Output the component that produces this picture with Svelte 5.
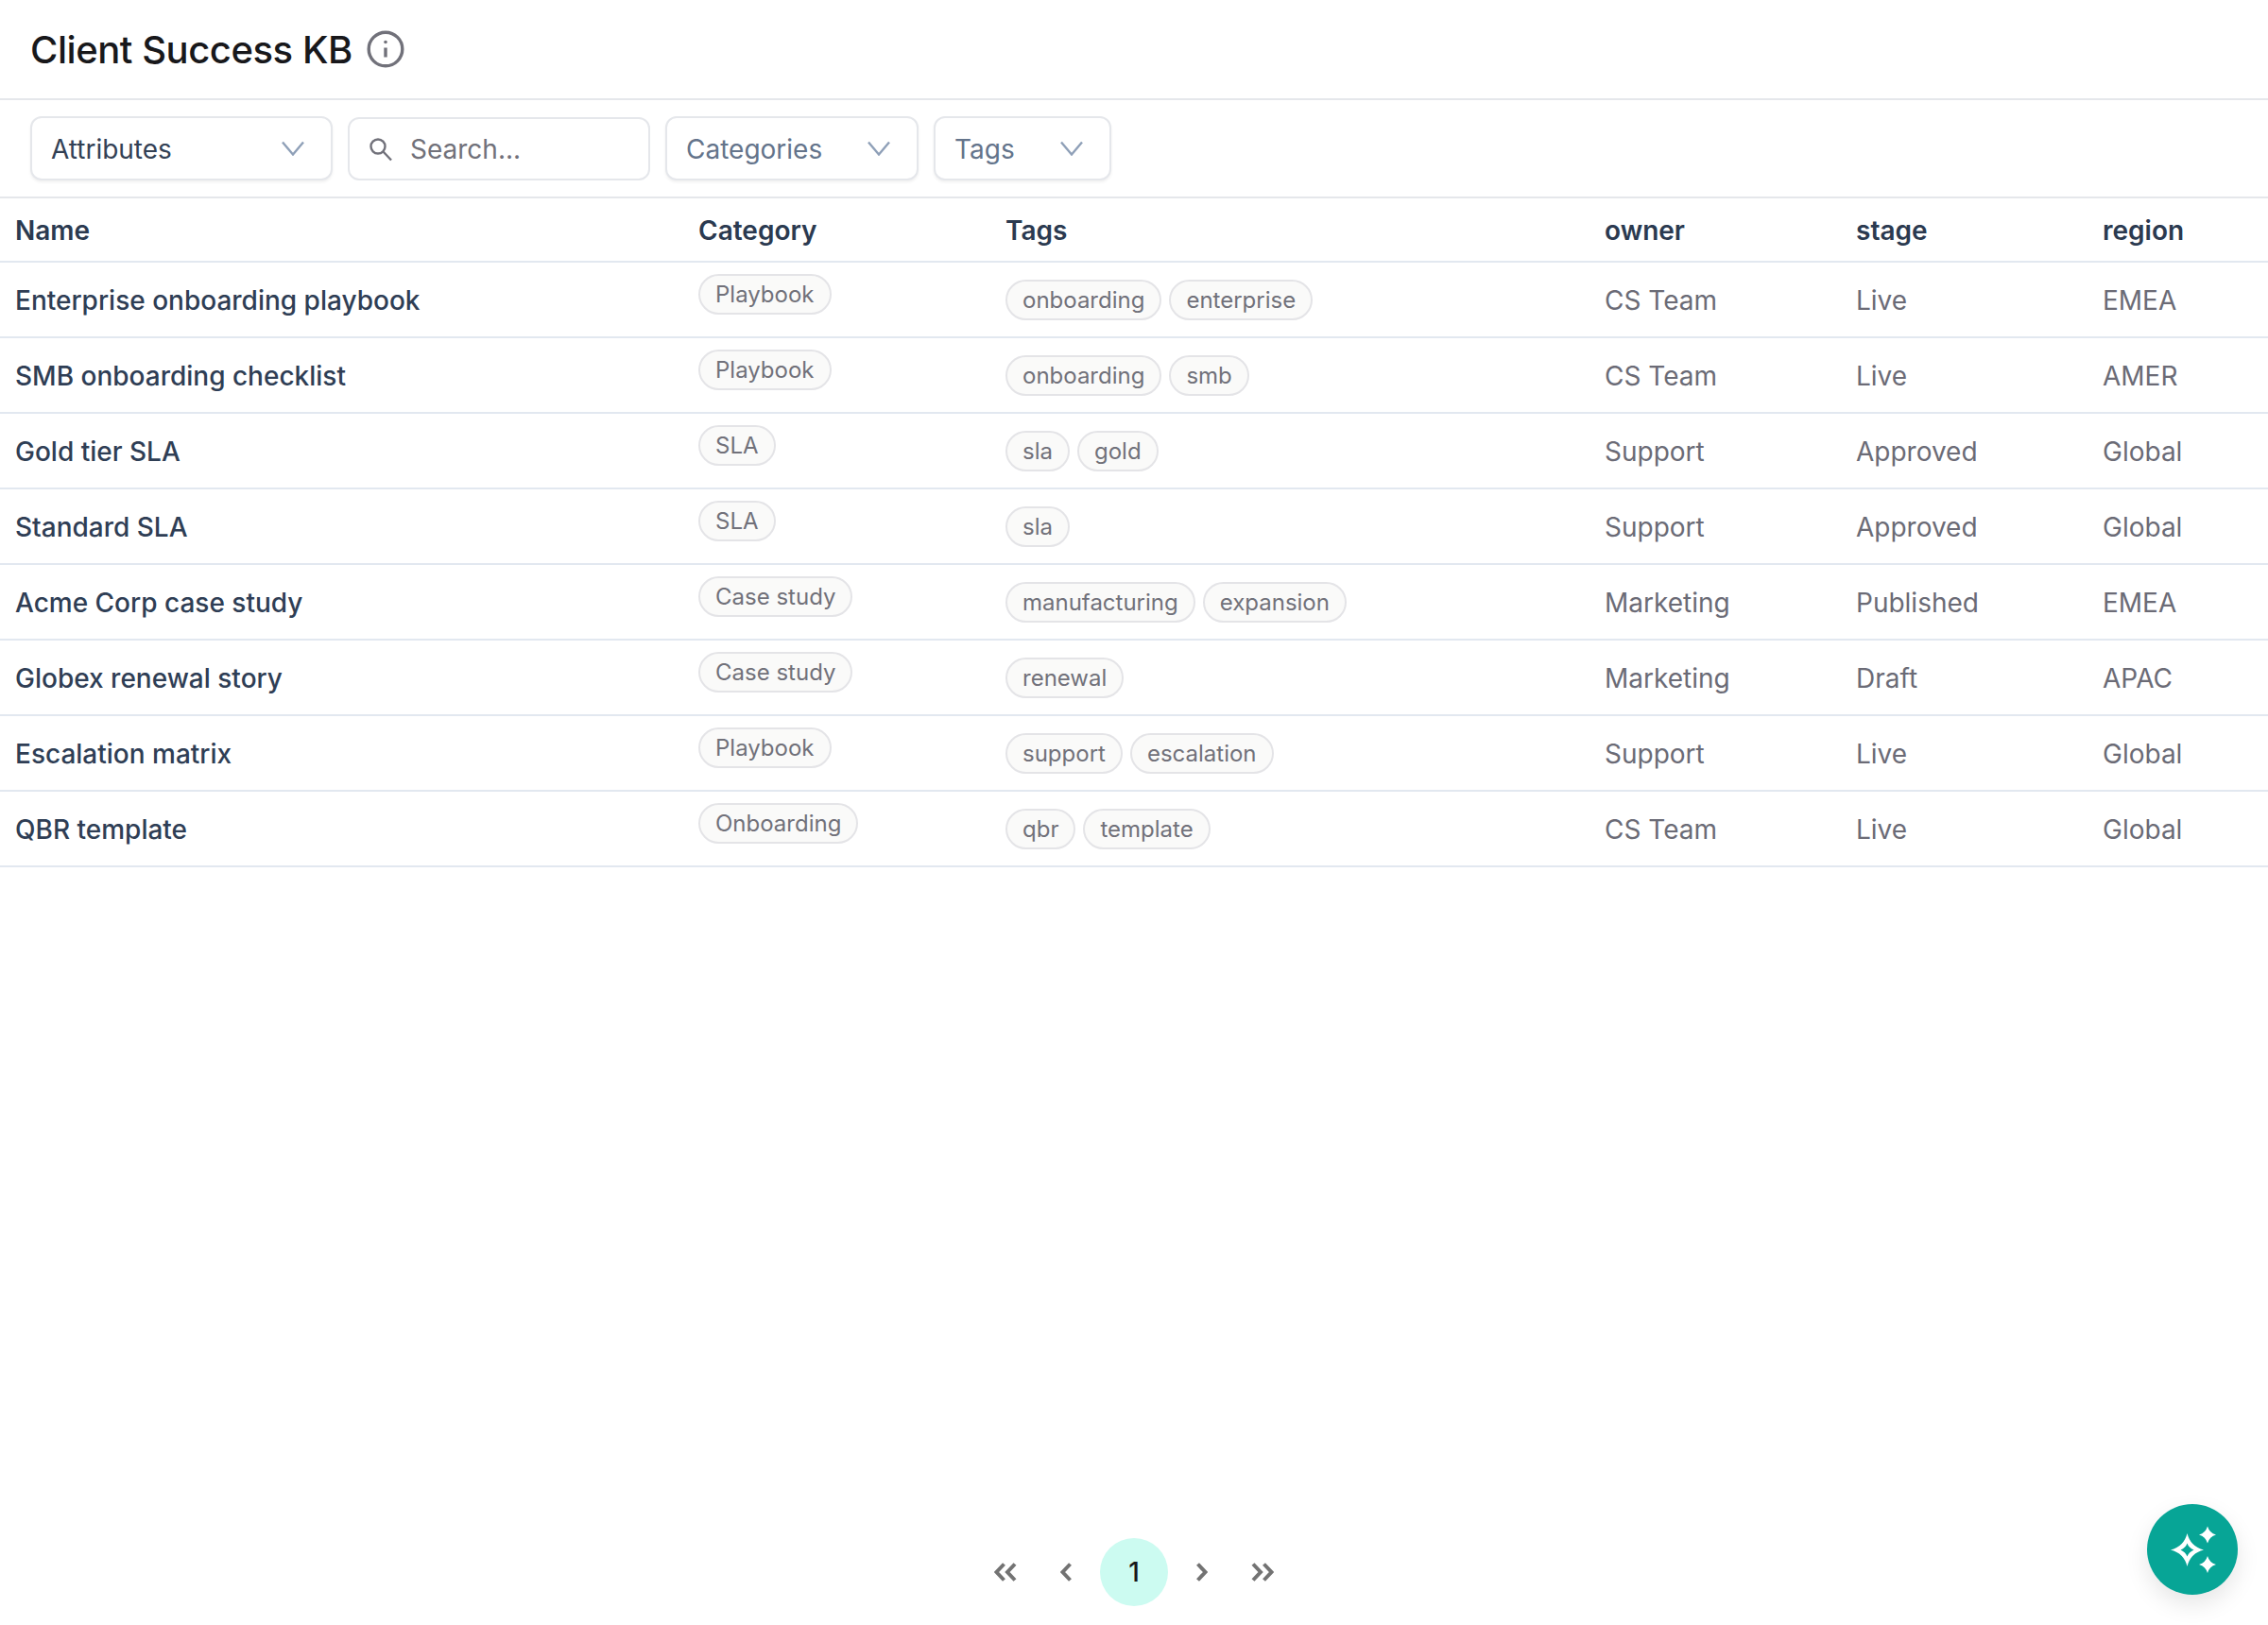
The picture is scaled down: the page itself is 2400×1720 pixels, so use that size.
<script>
  const rows = [
    { name: "Enterprise onboarding playbook", category: "Playbook", tags: ["onboarding", "enterprise"], owner: "CS Team", stage: "Live", region: "EMEA" },
    { name: "SMB onboarding checklist", category: "Playbook", tags: ["onboarding", "smb"], owner: "CS Team", stage: "Live", region: "AMER" },
    { name: "Gold tier SLA", category: "SLA", tags: ["sla", "gold"], owner: "Support", stage: "Approved", region: "Global" },
    { name: "Standard SLA", category: "SLA", tags: ["sla"], owner: "Support", stage: "Approved", region: "Global" },
    { name: "Acme Corp case study", category: "Case study", tags: ["manufacturing", "expansion"], owner: "Marketing", stage: "Published", region: "EMEA" },
    { name: "Globex renewal story", category: "Case study", tags: ["renewal"], owner: "Marketing", stage: "Draft", region: "APAC" },
    { name: "Escalation matrix", category: "Playbook", tags: ["support", "escalation"], owner: "Support", stage: "Live", region: "Global" },
    { name: "QBR template", category: "Onboarding", tags: ["qbr", "template"], owner: "CS Team", stage: "Live", region: "Global" }
  ];
</script>

{#snippet chevron()}
  <svg class="chev" width="24" height="16" viewBox="0 0 24 16" fill="none" stroke="#8fa0b8" stroke-width="2.4"><path d="M1 1.500l11 13 11-13" /></svg>
{/snippet}

<div class="page">
  <header class="top">
    <h1>Client Success KB</h1>
    <svg width="40" height="40" viewBox="0 0 40 40" fill="none" stroke="#71717a" stroke-width="3.4">
      <circle cx="20" cy="20" r="17.800" />
      <path d="M20 18.500v10" />
      <circle cx="20" cy="12.500" r="1.800" fill="#71717a" stroke="none" />
    </svg>
  </header>

  <div class="filters">
    <button class="select attrs" type="button"><span class="dark">Attributes</span>{@render chevron()}</button>
    <div class="search">
      <svg width="26" height="26" viewBox="0 0 26 26" fill="none" stroke="#71717a" stroke-width="2.4"><circle cx="10" cy="10" r="7.500" /><path d="M15.500 15.500L24 24.500" /></svg>
      <span>Search...</span>
    </div>
    <button class="select cats" type="button"><span>Categories</span>{@render chevron()}</button>
    <button class="select tagsel" type="button"><span>Tags</span>{@render chevron()}</button>
  </div>

  <table>
    <colgroup>
      <col style="width:723px" /><col style="width:325px" /><col style="width:634px" /><col style="width:266px" /><col style="width:261px" /><col />
    </colgroup>
    <thead>
      <tr><th>Name</th><th>Category</th><th>Tags</th><th>owner</th><th>stage</th><th>region</th></tr>
    </thead>
    <tbody>
      {#each rows as row}
        <tr>
          <td class="name">{row.name}</td>
          <td class="cat"><span class="pill">{row.category}</span></td>
          <td><div class="tags">{#each row.tags as tag}<span class="pill">{tag}</span>{/each}</div></td>
          <td>{row.owner}</td>
          <td>{row.stage}</td>
          <td>{row.region}</td>
        </tr>
      {/each}
    </tbody>
  </table>

  <nav class="pager">
    <svg class="double" width="24" height="20" viewBox="0 0 24 20"><path d="M10.500 1.500L2.500 10l8 8.500M22 1.500L14 10l8 8.500" /></svg>
    <svg width="12" height="20" viewBox="0 0 12 20"><path d="M10.500 1.500L2.500 10l8 8.500" /></svg>
    <span class="current">1</span>
    <svg width="12" height="20" viewBox="0 0 12 20"><path d="M1.500 1.500l8 8.500-8 8.500" /></svg>
    <svg class="double" width="24" height="20" viewBox="0 0 24 20"><path d="M2 1.500L10 10l-8 8.500M13.500 1.500l8 8.500-8 8.500" /></svg>
  </nav>

  <button class="fab" type="button" aria-label="Assistant">
    <svg width="56" height="56" viewBox="0 0 56 56" fill="#fff">
      <path fill-rule="evenodd" d="M22.500 11Q26 25 40 28.500 26 32 22.500 46 19 32 5 28.500 19 25 22.500 11zM22.500 21.500Q24 26 29.500 28.500 24 31 22.500 35.500 21 31 15.500 28.500 21 26 22.500 21.500z" />
      <path d="M44 3.500Q46 10.500 53 12.500 46 14.500 44 21.500 42 14.500 35 12.500 42 10.500 44 3.500z" />
      <path d="M44 35Q46 42 53 44 46 46 44 53 42 46 35 44 42 42 44 35z" />
    </svg>
  </button>
</div>

<style>
  :global(body) {
    margin: 0;
    background: #fff;
    font-family: Inter, "Liberation Sans", sans-serif;
  }

  .page {
    position: relative;
    height: 1720px;
    display: flex;
    flex-direction: column;
    overflow: hidden;
  }

  .top {
    height: 104px;
    padding-left: 32px;
    display: flex;
    align-items: center;
    gap: 15px;
    border-bottom: 2px solid #e5e7eb;
  }

  h1 {
    margin: 0;
    font-size: 40px;
    font-weight: 500;
    letter-spacing: -0.45px;
    color: #18181b;
  }

  .filters {
    height: 102px;
    padding-left: 32px;
    display: flex;
    align-items: center;
    gap: 16px;
    border-bottom: 2px solid #e5e7eb;
  }

  .select,
  .search {
    height: 68px;
    box-sizing: border-box;
    border: 2px solid #e5e7eb;
    border-radius: 12px;
    background: #fff;
    font: inherit;
    font-size: 28px;
    display: flex;
    align-items: center;
    justify-content: space-between;
    color: #64748b;
    padding: 0 28px 0 20px;
  }

  .select {
    box-shadow: 0 2px 3px rgba(0, 0, 0, 0.06);
  }

  .select span {
    padding-top: 2px;
  }

  .dark {
    color: #334155;
  }

  .attrs { width: 320px; }
  .cats { width: 268px; }
  .tagsel { width: 188px; }

  .search {
    width: 320px;
    height: 67px;
    margin-top: 1px;
    justify-content: flex-start;
    gap: 18px;
    color: #71717a;
  }

  table {
    width: 2400px;
    border-collapse: collapse;
    table-layout: fixed;
  }

  th {
    height: 65px;
    padding: 1px 16px 0;
    text-align: left;
    font-size: 28px;
    font-weight: 600;
    color: #2b3a50;
    border-bottom: 2px solid #e2e8f0;
  }

  td {
    height: 77px;
    padding: 1px 16px 0;
    font-size: 28px;
    color: #6b6b76;
    border-bottom: 2px solid #e2e8f0;
  }

  td.name {
    font-weight: 500;
    color: #2f3e55;
  }

  td.cat .pill {
    position: relative;
    top: -6px;
  }

  .tags {
    display: flex;
    gap: 8px;
  }

  .pill {
    display: inline-block;
    height: 43px;
    box-sizing: border-box;
    line-height: 39px;
    padding: 0 16px;
    border: 2px solid #e4e4e7;
    border-radius: 22px;
    background: #fafaf9;
    font-size: 24px;
    color: #71717a;
  }

  .pager {
    position: absolute;
    left: 0;
    right: 0;
    top: 1628px;
    display: flex;
    justify-content: center;
    align-items: center;
    gap: 30px;
  }

  .pager svg {
    fill: none;
    stroke: #737373;
    stroke-width: 4;
  }

  .pager .double:first-child {
    margin-right: 16px;
  }

  .pager .double:last-child {
    margin-left: 16px;
  }

  .current {
    width: 72px;
    height: 72px;
    border-radius: 50%;
    background: #ccfbf1;
    display: flex;
    align-items: center;
    justify-content: center;
    font-size: 28px;
    font-weight: 500;
    color: #18181b;
  }

  .fab {
    position: absolute;
    left: 2272px;
    top: 1592px;
    width: 96px;
    height: 96px;
    border: 0;
    padding: 0;
    border-radius: 50%;
    background: #07a596;
    box-shadow: 0 10px 24px rgba(0, 0, 0, 0.1);
    display: flex;
    align-items: center;
    justify-content: center;
  }
</style>
